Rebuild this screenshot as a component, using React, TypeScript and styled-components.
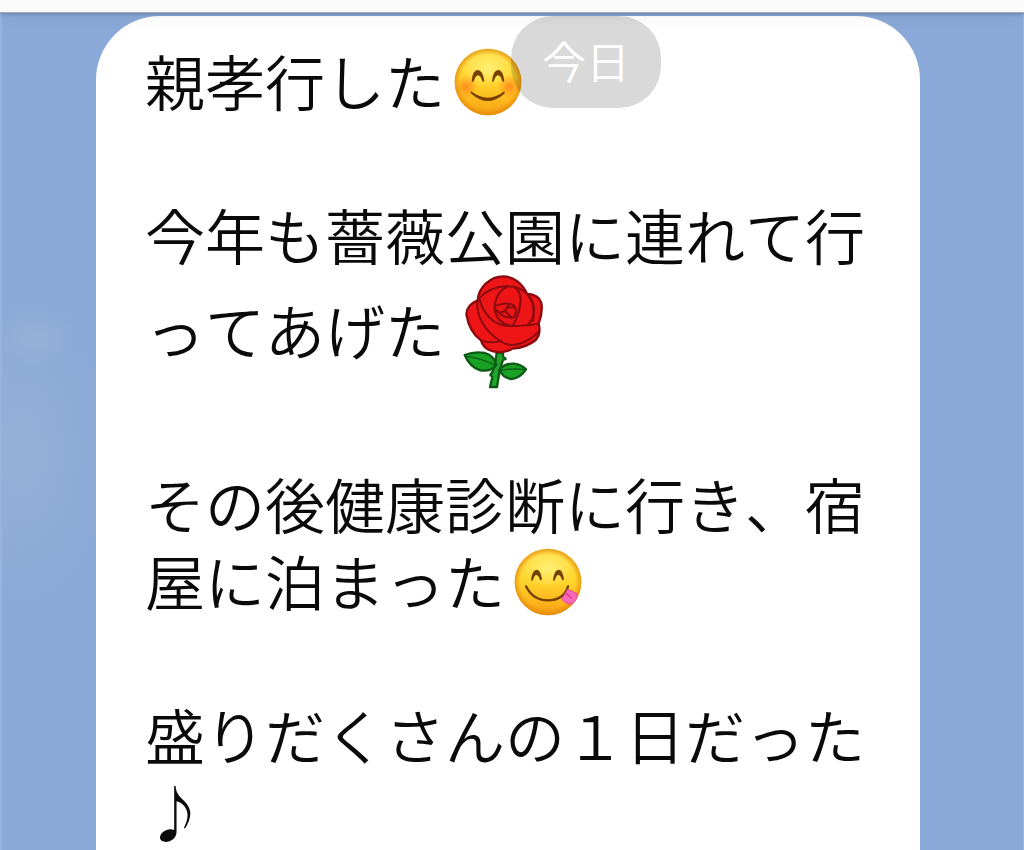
import React from "react";
import styled, { createGlobalStyle } from "styled-components";

const GlobalStyle = createGlobalStyle`
  * { box-sizing: border-box; }
  body {
    margin: 0;
    font-family: "Noto Sans CJK JP", "Liberation Sans", sans-serif;
    font-weight: 350;
    font-kerning: none;
  }
`;

const Screen = styled.div`
  position: relative;
  display: flex;
  flex-direction: column;
  height: 100vh;
  overflow: hidden;
  background: #8ba9d8;
`;

const TopBar = styled.header`
  position: relative;
  z-index: 2;
  flex: none;
  height: 13px;
  background: #fbfbfb;
  border-bottom: 1px solid #a3abba;
  box-shadow: 0 1px 3px rgba(40, 60, 110, 0.35), 0 4px 16px rgba(0, 0, 0, 0.06);
`;

const Conversation = styled.main`
  flex: 1;
  min-height: 0;
  display: flex;
  overflow-y: auto;
  scrollbar-width: none;
  padding: 3px 104px 0 96px;
  background:
    radial-gradient(ellipse 90px 150px at 20px 440px, rgba(158, 182, 216, 0.55), transparent),
    radial-gradient(ellipse 44px 30px at 36px 324px, rgba(158, 182, 216, 0.5), transparent),
    #8ba9d8;
  box-shadow: inset 2px 0 #98b3e0, inset -1px 0 #98b3e0;
`;

const Bubble = styled.article`
  flex: 1;
  align-self: flex-start;
  min-height: 100%;
  padding: 25px 50px 0 49px;
  border-radius: 64px 64px 0 0;
  background: #fff;
  color: #0a0a0a;
  font-size: 60px;
  line-height: 77px;
  line-break: anywhere;
`;

const Paragraph = styled.p`
  margin: 0 0 77px;

  &:last-child {
    margin-bottom: 0;
  }
`;

const DateBadge = styled.time`
  position: absolute;
  z-index: 1;
  top: 16px;
  left: 50%;
  width: 150px;
  height: 92px;
  margin-left: -1px;
  border-radius: 42px;
  background: rgba(0, 0, 0, 0.15);
  color: #fff;
  font-size: 44px;
  line-height: 88px;
  text-align: center;
`;

const Face = styled.svg`
  width: 68px;
  height: 68px;
  margin: 0 9px;
  vertical-align: -10px;
`;

const Flower = styled.svg`
  width: 115px;
  height: 115px;
  vertical-align: -32px;
  overflow: visible;
`;

function FaceBase({ id, blush }: { id: string; blush?: boolean }) {
  return (
    <>
      <defs>
        <linearGradient id={`${id}-skin`} x1="0" y1="0" x2="0" y2="1">
          <stop offset="0" stopColor="#ffe04a" />
          <stop offset="0.5" stopColor="#ffd42c" />
          <stop offset="0.8" stopColor="#fdb51c" />
          <stop offset="1" stopColor="#f09a12" />
        </linearGradient>
        <radialGradient id={`${id}-rim`}>
          <stop offset="0.82" stopColor="#e98a08" stopOpacity="0" />
          <stop offset="1" stopColor="#e08607" stopOpacity="0.75" />
        </radialGradient>
        <radialGradient id={`${id}-glow`}>
          <stop offset="0" stopColor="#fff27a" stopOpacity="0.9" />
          <stop offset="1" stopColor="#fff27a" stopOpacity="0" />
        </radialGradient>
        <radialGradient id={`${id}-blush`}>
          <stop offset="0" stopColor="#ff7a1c" stopOpacity="0.8" />
          <stop offset="1" stopColor="#ff8a1c" stopOpacity="0" />
        </radialGradient>
      </defs>
      <circle cx="102" cy="102" r="100" fill={`url(#${id}-skin)`} />
      <ellipse cx="102" cy="62" rx="80" ry="56" fill={`url(#${id}-glow)`} />
      <circle cx="102" cy="102" r="100" fill={`url(#${id}-rim)`} />
      {blush && (
        <>
          <circle cx="36" cy="116" r="36" fill={`url(#${id}-blush)`} />
          <circle cx="166" cy="116" r="36" fill={`url(#${id}-blush)`} />
        </>
      )}
    </>
  );
}

function SmilingFace() {
  return (
    <Face viewBox="0 0 204 204" role="img" aria-label="にっこり">
      <FaceBase id="smile" blush />
      <path d="M53 99Q56 66 71 66Q86 66 91 99Q89 103 85 100Q80 82 72 82Q65 82 59 100Q54 104 53 99Z" fill="#754000" />
      <path d="M114 99Q118 66 133 66Q147 66 151 99Q149 103 145 100Q140 82 132 82Q125 82 119 100Q115 104 114 99Z" fill="#754000" />
      <path d="M51 130Q101 168 151 130Q153 133 151 137Q101 181 52 137Q48 132 51 130Z" fill="#754000" />
    </Face>
  );
}

function YummyFace() {
  return (
    <Face viewBox="0 0 204 204" role="img" aria-label="おいしい">
      <FaceBase id="yummy" />
      <path d="M51 96Q55 65 68 65Q80 65 84 94Q82 99 78 95Q73 81 67 81Q61 81 57 96Q53 101 51 96Z" fill="#754000" />
      <path d="M117 96Q121 65 134 65Q146 65 150 94Q148 99 144 95Q139 81 133 81Q127 81 123 96Q119 101 117 96Z" fill="#754000" />
      <path d="M36 115Q57 157 100 157Q150 157 162 115" fill="none" stroke="#754000" strokeWidth="7" strokeLinecap="round" />
      <path d="M161 124L188 136Q191 142 188 150Q180 169 164 168Q153 164 144 155Q143 149 149 144Z" fill="#f968b5" stroke="#e5489c" strokeWidth="3" strokeLinejoin="round" />
      <path d="M157 137L172 150" stroke="#d63a90" strokeWidth="4" strokeLinecap="round" />
    </Face>
  );
}

function Rose() {
  return (
    <Flower viewBox="15 36 345 345" role="img" aria-label="薔薇">
      <g stroke="#0c5a14" strokeWidth="7" strokeLinejoin="round" strokeLinecap="round">
        <path d="M170 279L166 307L158 334L151 345L157 351L150 381L171 381L179 331L189 300L197 297L189 290L189 278Z" fill="#22a52b" />
        <path d="M74 285Q104 273 135 279Q162 287 169 315Q153 336 121 331Q90 322 74 285Z" fill="#19a126" />
        <path d="M178 330Q195 309 222 311Q244 314 258 328Q241 354 215 357Q189 354 178 330Z" fill="#19a126" />
        <path d="M82 290Q120 294 167 316M182 331Q218 324 252 328" fill="none" strokeWidth="4" />
      </g>
      <g stroke="#8a0b10" strokeWidth="7" strokeLinejoin="round" strokeLinecap="round">
        <path d="M113 121C116 82 151 49 190 49C221 50 248 71 261 102C281 101 302 112 305 135C307 157 302 175 296 191C300 207 299 227 287 240C268 256 242 264 217 266C199 279 169 279 147 270C134 264 127 254 123 241C99 224 84 194 79 162C80 143 94 129 113 121Z" fill="#ed1515" />
        <g fill="none" strokeWidth="6">
          <path d="M113 121C107 159 127 211 185 246C213 265 262 251 296 215" />
          <path d="M113 121C134 93 173 76 207 79C246 80 277 107 281 139C284 165 277 182 263 195" />
          <path d="M119 119C135 177 175 201 218 198C253 197 282 195 294 190" />
          <path d="M261 102C277 119 286 151 279 182" />
          <path d="M203 80C178 91 165 116 164 144C166 173 185 195 218 198C231 175 241 148 242 119C241 102 234 89 225 83" />
          <path d="M170 136C187 130 207 128 222 136C230 148 229 161 222 172C202 176 180 167 168 149" />
          <path d="M207 132L195 153L179 158M195 153L214 172M202 143L224 141" />
          <path d="M123 241C144 249 164 249 184 242" />
        </g>
      </g>
    </Flower>
  );
}

export default function App() {
  return (
    <Screen lang="ja">
      <GlobalStyle />
      <TopBar />
      <DateBadge>今日</DateBadge>
      <Conversation>
        <Bubble>
          <Paragraph>
            親孝行した
            <SmilingFace />
          </Paragraph>
          <Paragraph>
            今年も薔薇公園に連れて行ってあげた
            <Rose />
          </Paragraph>
          <Paragraph>
            その後健康診断に行き、宿屋に泊まった
            <YummyFace />
          </Paragraph>
          <Paragraph>盛りだくさんの１日だった♪</Paragraph>
        </Bubble>
      </Conversation>
    </Screen>
  );
}
